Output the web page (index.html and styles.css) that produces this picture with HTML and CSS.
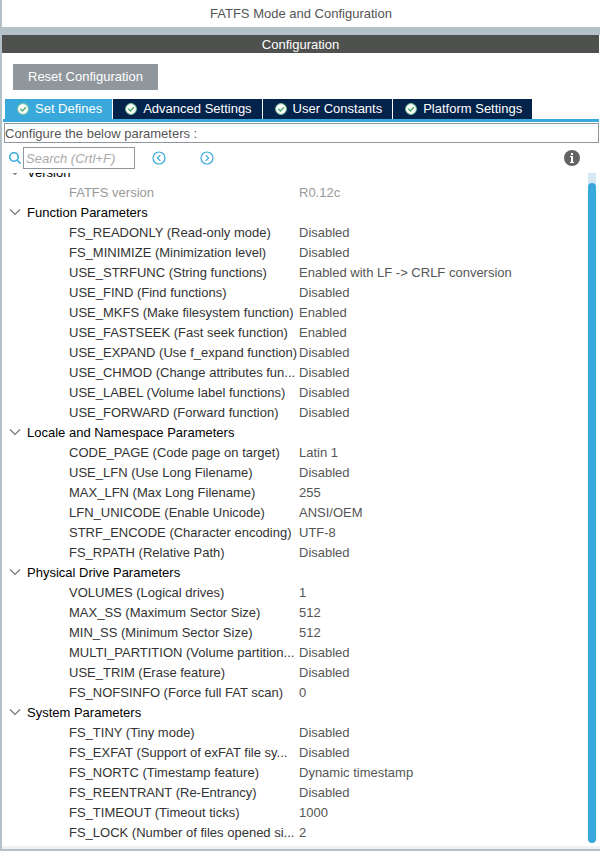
FILE: index.html
```html
<!DOCTYPE html>
<html lang="en">
<head>
<meta charset="utf-8">
<title>FATFS Mode and Configuration</title>
<link rel="stylesheet" href="styles.css">
</head>
<body>
<svg class="defs" aria-hidden="true">
  <symbol id="check" viewBox="0 0 12 12">
    <circle cx="6" cy="6" r="5.4" fill="#fff" stroke="#7cc698" stroke-width="1"/>
    <path d="M3.3 5.8l2.1 2.1 3.5-3.6" fill="none" stroke="#4cab6d" stroke-width="1.4"/>
  </symbol>
  <symbol id="chevron" viewBox="0 0 12 8">
    <path d="M1 1.5l5 5 5-5" fill="none" stroke="#777" stroke-width="1.2"/>
  </symbol>
</svg>
<div class="window">
  <h1 class="title">FATFS Mode and Configuration</h1>
  <main class="panel">
    <h2 class="heading">Configuration</h2>
    <div class="actions"><button class="reset" type="button">Reset Configuration</button></div>
    <nav class="tabs">
      <button class="tab active" type="button"><svg><use href="#check"/></svg>Set Defines</button>
      <button class="tab" type="button"><svg><use href="#check"/></svg>Advanced Settings</button>
      <button class="tab" type="button"><svg><use href="#check"/></svg>User Constants</button>
      <button class="tab" type="button"><svg><use href="#check"/></svg>Platform Settings</button>
    </nav>
    <p class="hint">Configure the below parameters :</p>
    <div class="toolbar">
      <label class="search-label" for="search" aria-label="Search"><svg viewBox="0 0 12 12"><circle cx="5" cy="5" r="4.2"/><path d="M8 8l3.6 3.6"/></svg></label>
      <input class="search" id="search" type="text" placeholder="Search (Crtl+F)">
      <button class="step" type="button" aria-label="Previous"><svg viewBox="0 0 14 14"><circle cx="7" cy="7" r="6"/><path d="M8.3 4.2L5.5 7l2.8 2.8"/></svg></button>
      <button class="step next" type="button" aria-label="Next"><svg viewBox="0 0 14 14"><circle cx="7" cy="7" r="6"/><path d="M5.7 4.2L8.5 7 5.7 9.8"/></svg></button>
      <button class="info" type="button" aria-label="Information"><svg viewBox="0 0 16 16"><circle cx="8" cy="8" r="8" fill="#636363"/><path d="M7 3h2v2H7zM6 6h3v6h1v1H6v-1h1V7H6z" fill="#fff"/></svg></button>
    </div>
    <div class="content">
      <div class="list">
        <table class="params">
          <colgroup><col class="name"><col></colgroup>
          <tbody>
            <tr><th colspan="2"><svg><use href="#chevron"/></svg>Version</th></tr>
            <tr class="readonly"><td>FATFS version</td><td>R0.12c</td></tr>
          </tbody>
          <tbody>
            <tr><th colspan="2"><svg><use href="#chevron"/></svg>Function Parameters</th></tr>
            <tr><td>FS_READONLY (Read-only mode)</td><td>Disabled</td></tr>
            <tr><td>FS_MINIMIZE (Minimization level)</td><td>Disabled</td></tr>
            <tr><td>USE_STRFUNC (String functions)</td><td>Enabled with LF -&gt; CRLF conversion</td></tr>
            <tr><td>USE_FIND (Find functions)</td><td>Disabled</td></tr>
            <tr><td>USE_MKFS (Make filesystem function)</td><td>Enabled</td></tr>
            <tr><td>USE_FASTSEEK (Fast seek function)</td><td>Enabled</td></tr>
            <tr><td>USE_EXPAND (Use f_expand function)</td><td>Disabled</td></tr>
            <tr><td>USE_CHMOD (Change attributes fun...</td><td>Disabled</td></tr>
            <tr><td>USE_LABEL (Volume label functions)</td><td>Disabled</td></tr>
            <tr><td>USE_FORWARD (Forward function)</td><td>Disabled</td></tr>
          </tbody>
          <tbody>
            <tr><th colspan="2"><svg><use href="#chevron"/></svg>Locale and Namespace Parameters</th></tr>
            <tr><td>CODE_PAGE (Code page on target)</td><td>Latin 1</td></tr>
            <tr><td>USE_LFN (Use Long Filename)</td><td>Disabled</td></tr>
            <tr><td>MAX_LFN (Max Long Filename)</td><td>255</td></tr>
            <tr><td>LFN_UNICODE (Enable Unicode)</td><td>ANSI/OEM</td></tr>
            <tr><td>STRF_ENCODE (Character encoding)</td><td>UTF-8</td></tr>
            <tr><td>FS_RPATH (Relative Path)</td><td>Disabled</td></tr>
          </tbody>
          <tbody>
            <tr><th colspan="2"><svg><use href="#chevron"/></svg>Physical Drive Parameters</th></tr>
            <tr><td>VOLUMES (Logical drives)</td><td>1</td></tr>
            <tr><td>MAX_SS (Maximum Sector Size)</td><td>512</td></tr>
            <tr><td>MIN_SS (Minimum Sector Size)</td><td>512</td></tr>
            <tr><td>MULTI_PARTITION (Volume partition...</td><td>Disabled</td></tr>
            <tr><td>USE_TRIM (Erase feature)</td><td>Disabled</td></tr>
            <tr><td>FS_NOFSINFO (Force full FAT scan)</td><td>0</td></tr>
          </tbody>
          <tbody>
            <tr><th colspan="2"><svg><use href="#chevron"/></svg>System Parameters</th></tr>
            <tr><td>FS_TINY (Tiny mode)</td><td>Disabled</td></tr>
            <tr><td>FS_EXFAT (Support of exFAT file sy...</td><td>Disabled</td></tr>
            <tr><td>FS_NORTC (Timestamp feature)</td><td>Dynamic timestamp</td></tr>
            <tr><td>FS_REENTRANT (Re-Entrancy)</td><td>Disabled</td></tr>
            <tr><td>FS_TIMEOUT (Timeout ticks)</td><td>1000</td></tr>
            <tr><td>FS_LOCK (Number of files opened si...</td><td>2</td></tr>
          </tbody>
        </table>
      </div>
      <div class="scrollbar"><div class="thumb"></div></div>
    </div>
  </main>
</div>
</body>
</html>
```
FILE: styles.css
```css
* { box-sizing: border-box; }
body {
  margin: 0;
  background: #fff;
  color: #555;
  font: 13px/20px "Liberation Sans", Arial, sans-serif;
}
h1, h2, p { margin: 0; font-size: inherit; font-weight: normal; }
button { border: 0; padding: 0; font: inherit; background: none; }
svg { display: block; flex: none; }
.defs { display: none; }

.window {
  border-left: 2px solid #b5c1c9;
  border-bottom: 2px solid #b5c1c9;
}
.title {
  height: 35px;
  padding-top: 4px;
  border-bottom: 8px solid #b5c1c9;
  text-align: center;
}
.panel { padding-right: 1px; border-bottom: 3px solid #eff1f3; }
.heading {
  height: 18px;
  background: #4f514f;
  color: #fff;
  text-align: center;
}
.actions { padding: 11px 11px 9px; }
.reset {
  display: block;
  height: 26px;
  padding: 0 15px;
  background: #90979c;
  color: #fff;
}

.tabs {
  display: flex;
  gap: 1px;
  margin-left: 1px;
  padding-left: 2px;
  border-bottom: 3px solid #39a9dc;
}
.tab {
  display: flex;
  align-items: center;
  gap: 6px;
  height: 20px;
  padding: 0 10px 0 12px;
  background: #03234b;
  color: #fff;
}
.tab svg { width: 12px; height: 12px; }
.tab.active { background: #39a9dc; }

.hint {
  height: 20px;
  margin: 1px 0 0 2px;
  border: 1px solid #90979c;
}
.toolbar {
  display: flex;
  align-items: center;
  height: 30px;
  padding: 0 19px 0 7px;
}
.toolbar svg { fill: none; stroke: #39a9dc; stroke-width: 1.2; }
.toolbar .search-label svg { width: 12px; height: 12px; stroke-width: 1.6; }
.search {
  width: 112px;
  height: 22px;
  margin: 0 17px 0 2px;
  padding: 0 2px;
  border: 1px solid #90979c;
  font: inherit;
}
.search::placeholder { color: #aaa; font-style: italic; opacity: 1; }
.step svg { width: 14px; height: 14px; }
.next { margin-left: 34px; }
.info { margin-left: auto; }
.toolbar .info svg { width: 16px; height: 16px; stroke: none; }

.content { display: flex; padding-right: 3px; }
.list { flex: 1; overflow: hidden; padding-bottom: 4px; }
.params {
  width: 100%;
  margin-top: -11px;
  border-collapse: collapse;
  table-layout: fixed;
}
.params .name { width: 297px; }
.params th, .params td {
  height: 20px;
  padding: 2px 0 0;
  line-height: 18px;
  white-space: nowrap;
}
.params th {
  position: relative;
  padding-left: 25px;
  color: #000;
  font-weight: normal;
  text-align: left;
}
.params th svg { position: absolute; left: 7px; top: 6px; width: 12px; height: 8px; }
.params td:first-child { padding-left: 67px; color: #333; }
.params .readonly td { color: #999; }
.scrollbar {
  display: flex;
  width: 8px;
  padding: 10px 0 3px;
  background: linear-gradient(#d7e8f5 50%, #fff 50%);
}
.thumb { flex: 1; border-radius: 4px; background: #39a9dc; }
```
